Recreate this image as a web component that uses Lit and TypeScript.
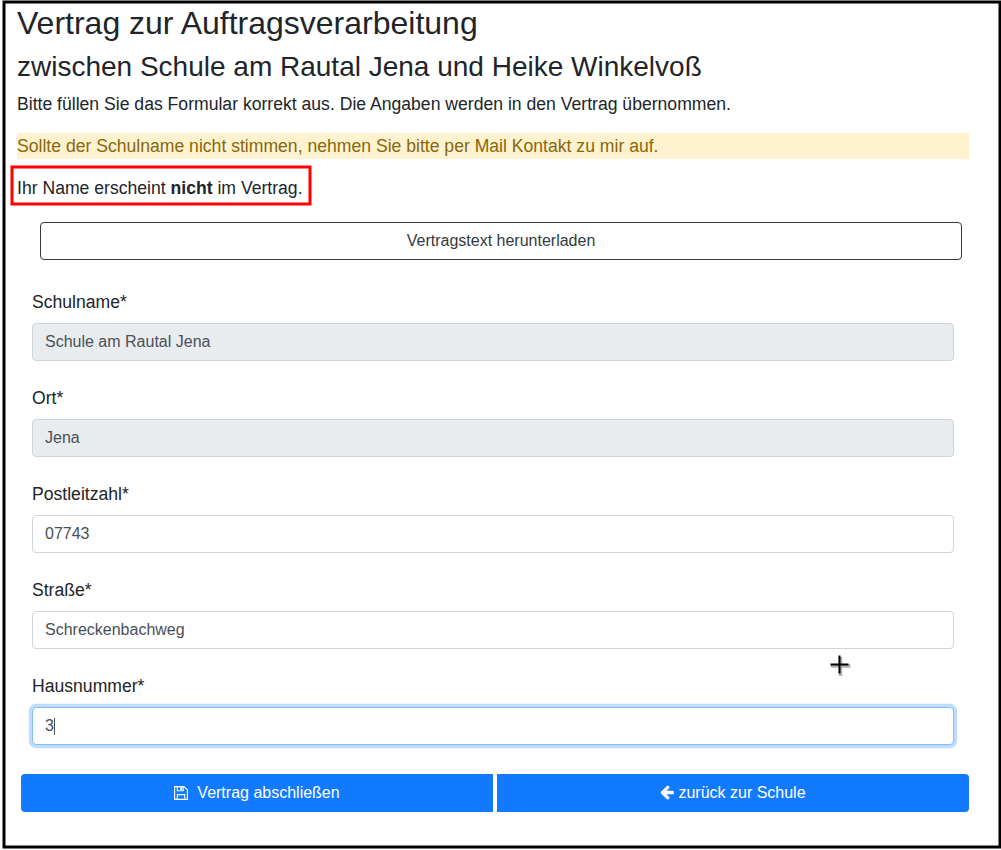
import { LitElement, html, css, svg } from "lit";
import { customElement } from "lit/decorators.js";

interface Field {
  label: string;
  value: string;
  state: "" | "disabled" | "focused";
}

const FIELDS: Field[] = [
  { label: "Schulname*", value: "Schule am Rautal Jena", state: "disabled" },
  { label: "Ort*", value: "Jena", state: "disabled" },
  { label: "Postleitzahl*", value: "07743", state: "" },
  { label: "Straße*", value: "Schreckenbachweg", state: "" },
  { label: "Hausnummer*", value: "3", state: "focused" },
];

@customElement("app-root")
export class AppRoot extends LitElement {
  static styles = css`
    :host {
      display: block;
      position: relative;
      box-sizing: border-box;
      width: 1001px;
      height: 850px;
      overflow: hidden;
      background: #fff;
      color: #212529;
      font-family: "Liberation Sans", Arial, sans-serif;
      font-size: 17.6px;
      line-height: 26.4px;
    }
    .page { padding: 4px 32px 0 17px; }
    h1, h2, p { margin: 0; font-weight: 400; }
    h1 { font-size: 32px; line-height: 38.4px; margin-bottom: 8px; }
    h2 { font-size: 28px; line-height: 33.6px; margin-bottom: 7px; }
    p { margin-bottom: 15.6px; }
    .note { background: #fff2ce; color: #88670f; }
    b { font-weight: 700; }
    .download, .field-box, .action {
      display: flex;
      align-items: center;
      box-sizing: border-box;
      height: 38px;
      border-radius: 4px;
      font-size: 16px;
      line-height: 24px;
    }
    .download {
      justify-content: center;
      margin: 21px 7px 0 23px;
      border: 1px solid #343a40;
      color: #343a40;
    }
    .form { padding: 29px 15px 0; }
    .field { height: 96px; }
    .label { display: block; height: 34px; }
    .field-box {
      border: 1px solid #ced4da;
      padding: 0 12px;
      color: #495057;
      background: #fff;
    }
    .disabled { background: #e9ecef; }
    .focused { border-color: #80bdff; box-shadow: 0 0 0 3.2px rgba(0, 123, 255, 0.25); }
    .caret { width: 1px; height: 17px; background: #495057; }
    .actions {
      display: grid;
      grid-template-columns: 1fr 1fr;
      gap: 4px;
      margin-left: 4px;
      margin-top: 5px;
    }
    .action { justify-content: center; background: #117aff; color: #fff; }
    .action:first-child { border-radius: 4px 0 0 4px; }
    .action:last-child { border-radius: 0 4px 4px 0; padding-right: 1px; }
    .save { width: 14px; height: 16px; margin: 0 9px 1px 0; }
    .back { width: 14px; height: 16px; margin: 0 4px 2px 1px; }
    .overlay { position: absolute; left: 0; top: 0; pointer-events: none; }
    .shadow { filter: blur(0.6px); }
  `;

  private saveIcon = html`<svg class="save" viewBox="0 0 14 16">
    <path d="M.6 1.6H10L13.4 5V14.4H.6ZM3.3 14V9.6H10.7V14M3.3 2V5.8H9.2V2" fill="none" stroke="#fff" stroke-width="1.1" />
    <path d="M6.3 2H8.4V5H6.3Z" fill="#fff" />
  </svg>`;

  private backIcon = html`<svg class="back" viewBox="0 0 1536 1792">
    <path fill="#fff" d="M1536 896v128q0 53-32.500 90.500t-84.500 37.500h-704l293 294q38 36 38 90t-38 90l-75 76q-37 37-90 37-52 0-91-37l-651-652q-37-37-37-90 0-52 37-91l651-650q38-38 91-38 52 0 90 38l75 74q38 38 38 91t-38 91l-293 293h704q52 0 84.500 37.500t32.500 90.500z" />
  </svg>`;

  private overlay = svg`<rect x="4" y="2" width="996" height="845" fill="none" stroke="#000" stroke-width="3" />
    <rect x="12" y="167" width="298" height="37" fill="none" stroke="#f00" stroke-width="3" />
    <path class="shadow" d="M831 666H850.500M840.500 657V676" fill="none" stroke="#000" stroke-opacity=".3" stroke-width="3.500" />
    <path d="M830.500 664.500H848.500M839.500 655.500V673.500" stroke="#000" stroke-width="2" />`;

  render() {
    return html`
      <main class="page">
        <h1>Vertrag zur Auftragsverarbeitung</h1>
        <h2>zwischen Schule am Rautal Jena und Heike Winkelvoß</h2>
        <p>Bitte füllen Sie das Formular korrekt aus. Die Angaben werden in den Vertrag übernommen.</p>
        <p class="note">Sollte der Schulname nicht stimmen, nehmen Sie bitte per Mail Kontakt zu mir auf.</p>
        <p>Ihr Name erscheint <b>nicht</b> im Vertrag.</p>
        <div class="download">Vertragstext herunterladen</div>
        <div class="form">
          ${FIELDS.map(
            (f) => html`<div class="field">
              <span class="label">${f.label}</span>
              <div class="field-box ${f.state}">
                <span>${f.value}</span>${f.state === "focused" ? html`<i class="caret"></i>` : ""}
              </div>
            </div>`
          )}
        </div>
        <div class="actions">
          <div class="action">${this.saveIcon}<span>Vertrag abschließen</span></div>
          <div class="action">${this.backIcon}<span>zurück zur Schule</span></div>
        </div>
      </main>
      <svg class="overlay" width="1001" height="850" viewBox="0 0 1001 850">${this.overlay}</svg>
    `;
  }
}
